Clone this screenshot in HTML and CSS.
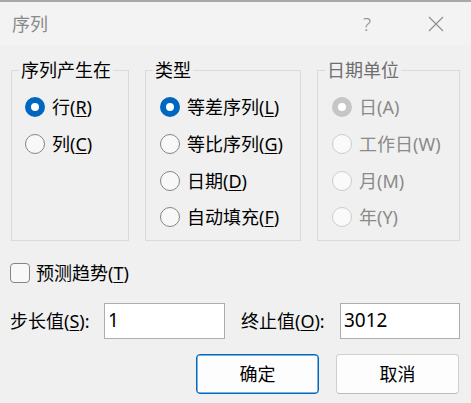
FILE: index.html
```html
<!DOCTYPE html>
<html lang="zh-CN">
<head>
<meta charset="utf-8">
<title>序列</title>
<link rel="stylesheet" href="styles.css">
</head>
<body>
<div class="titlebar">
  <span class="title">序列</span>
  <span class="help">?</span>
  <span class="close"><svg width="16" height="16" viewBox="0 0 16 16"><path d="M1 1 L15 15 M15 1 L1 15" stroke="#8c8c8c" stroke-width="1.1" fill="none"/></svg></span>
</div>
<div class="content">
  <div class="groups">
    <fieldset class="group g1">
      <legend>序列产生在</legend>
      <div class="opts">
        <div class="opt"><span class="radio on"></span><span>行(<u>R</u>)</span></div>
        <div class="opt"><span class="radio"></span><span>列(<u>C</u>)</span></div>
      </div>
    </fieldset>
    <fieldset class="group g2">
      <legend>类型</legend>
      <div class="opts">
        <div class="opt"><span class="radio on"></span><span>等差序列(<u>L</u>)</span></div>
        <div class="opt"><span class="radio"></span><span>等比序列(<u>G</u>)</span></div>
        <div class="opt"><span class="radio"></span><span>日期(<u>D</u>)</span></div>
        <div class="opt"><span class="radio"></span><span>自动填充(<u>F</u>)</span></div>
      </div>
    </fieldset>
    <fieldset class="group g3 disabled">
      <legend>日期单位</legend>
      <div class="opts">
        <div class="opt"><span class="radio on"></span><span>日(A)</span></div>
        <div class="opt"><span class="radio"></span><span>工作日(W)</span></div>
        <div class="opt"><span class="radio"></span><span>月(M)</span></div>
        <div class="opt"><span class="radio"></span><span>年(Y)</span></div>
      </div>
    </fieldset>
  </div>
  <div class="check"><span class="box"></span><span>预测趋势(<u>T</u>)</span></div>
  <div class="fields">
    <span class="lbl lbl1">步长值(<u>S</u>):</span>
    <span class="input in1">1</span>
    <span class="lbl lbl2">终止值(<u>O</u>):</span>
    <span class="input in2">3012</span>
  </div>
  <div class="buttons">
    <span class="btn ok">确定</span>
    <span class="btn cancel">取消</span>
  </div>
</div>
</body>
</html>
```
FILE: styles.css
```css
html, body {
  margin: 0;
  padding: 0;
  background: #f0f0f0;
  width: 471px;
  height: 403px;
  overflow: hidden;
}
body {
  font-family: "Noto Sans", "Noto Sans CJK SC", sans-serif;
  font-size: 18px;
  color: #000;
}
u { text-underline-offset: 2px; text-decoration-thickness: 1px; }

.titlebar {
  height: 43px;
  border-top: 2px solid #a8a8a8;
  background: #f3f3f3;
  display: flex;
  align-items: center;
}
.title {
  flex: 1;
  margin-left: 12px;
  color: #8a8a8a;
  line-height: 24px;
}
.help {
  color: #8a8a8a;
  font-size: 19px;
  font-weight: 300;
  margin-right: 57px;
  line-height: 24px;
}
.close {
  display: flex;
  margin-right: 27px;
}

.content {
  padding: 13px 11px 0 11px;
}
.groups {
  display: flex;
  gap: 16px;
}
.group {
  box-sizing: border-box;
  margin: 0;
  padding: 0;
  border: 1px solid #dadada;
  min-width: 0;
}
.g1 { width: 118px; }
.g2 { width: 156px; }
.g3 { width: 143px; }
.group legend {
  margin-left: 7px;
  padding: 0 2px;
  line-height: 24px;
}
.opts {
  box-sizing: border-box;
  height: 158px;
  padding: 7px 0 0 14px;
}
.g1 .opts { padding-left: 13px; }
.opt {
  display: flex;
  align-items: center;
  gap: 7px;
  height: 36.7px;
  line-height: 24px;
}
.radio {
  box-sizing: border-box;
  width: 20px;
  height: 20px;
  border-radius: 50%;
  border: 1px solid #858585;
  background: #f8f8f8;
  flex: none;
}
.radio.on {
  border: 6px solid #0067c0;
  background: #fff;
}
.disabled { color: #8a8a8a; }
.disabled legend { color: #6e6e6e; }
.disabled .radio {
  border-color: #cccccc;
  background: #fafafa;
}
.disabled .radio.on {
  border-color: #c6c6c6;
  background: #fff;
}

.check {
  display: flex;
  align-items: center;
  gap: 6px;
  margin-top: 22px;
  height: 20px;
  line-height: 24px;
}
.box {
  box-sizing: border-box;
  width: 20px;
  height: 20px;
  border: 1px solid #858585;
  border-radius: 4px;
  background: #f8f8f8;
  margin-left: -1px;
}

.fields {
  display: flex;
  align-items: center;
  margin-top: 20px;
  height: 36px;
}
.lbl { line-height: 24px; }
.lbl1 { width: 94px; margin-left: -1px; }
.lbl2 { width: 99px; margin-left: 16px; }
.input {
  box-sizing: border-box;
  height: 36px;
  background: #fff;
  border: 1px solid #adadad;
  padding: 4px 3px 0 3px;
  line-height: 24px;
  font-size: 19px;
}
.in1 { width: 121px; }
.in2 { width: 120px; }

.buttons {
  display: flex;
  justify-content: flex-end;
  gap: 17px;
  margin-top: 15px;
  padding-right: 1px;
}
.btn {
  box-sizing: border-box;
  width: 123px;
  height: 40px;
  display: flex;
  align-items: center;
  justify-content: center;
  border-radius: 4px;
  background: #fdfdfd;
  line-height: 24px;
}
.ok { border: 1px solid #0067c0; box-shadow: inset 0 0 0 0.5px #0067c0; }
.cancel { border: 1px solid #d0d0d0; border-bottom-color: #bcbcbc; }
```
